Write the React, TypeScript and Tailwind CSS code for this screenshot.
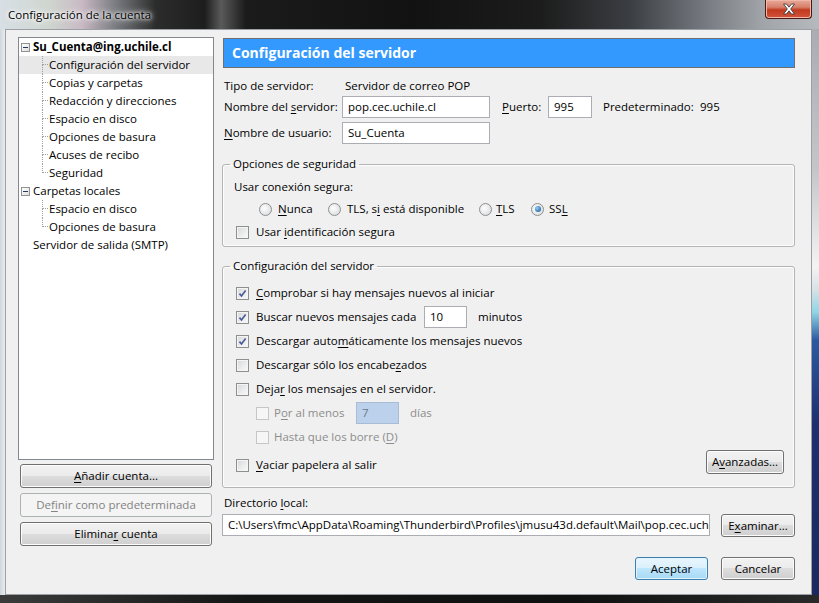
import type { ReactNode } from 'react';

const FONT = "[font-family:'Open_Sans','Noto_Sans',sans-serif]";

// mnemonic letter, Windows style
function U({ children }: { children: ReactNode }) {
  return <span className="underline underline-offset-[2px] decoration-[1px]">{children}</span>;
}

function Check({ checked = false, disabled = false }: { checked?: boolean; disabled?: boolean }) {
  return (
    <span
      className={`flex h-[13px] w-[13px] shrink-0 items-center justify-center border ${
        disabled
          ? 'border-[#c6c6c6] bg-[#f6f6f6]'
          : 'border-[#8e8f8f] bg-[linear-gradient(135deg,#d6d8db,#fbfbfb)] shadow-[inset_0_0_0_1px_#f4f4f4]'
      }`}
    >
      {checked && (
        <svg width="9" height="9" viewBox="0 0 9 9">
          <path d="M1.4 4.6l2.1 2.3L7.6 1.4" fill="none" stroke="#4a5f97" strokeWidth="1.7" />
        </svg>
      )}
    </span>
  );
}

function Radio({ on = false }: { on?: boolean }) {
  return (
    <span className="flex h-[13px] w-[13px] shrink-0 items-center justify-center rounded-full border border-[#8e8f8f] bg-[radial-gradient(circle_at_40%_40%,#ffffff,#d2d4d6)]">
      {on && (
        <span className="h-[6px] w-[6px] rounded-full bg-[radial-gradient(circle_at_35%_35%,#8fd0fb,#0e4a8c)]" />
      )}
    </span>
  );
}

function Btn({
  children,
  className = '',
  kind = 'normal',
}: {
  children: ReactNode;
  className?: string;
  kind?: 'normal' | 'default' | 'disabled';
}) {
  const look =
    kind === 'default'
      ? 'border-[#3c7fb1] bg-[linear-gradient(#eaf6fd_0%,#d9f0fc_50%,#bee6fd_50%,#a7d9f5_100%)] shadow-[inset_0_0_0_1px_#e2f3fc]'
      : kind === 'disabled'
        ? 'border-[#adb2b5] bg-[#f4f4f4] text-[#838383]'
        : 'border-[#707070] bg-[linear-gradient(#f2f2f2_0%,#ebebeb_50%,#dddddd_50%,#cfcfcf_100%)] shadow-[inset_0_0_0_1px_#fcfcfc]';
  return (
    <div className={`flex shrink-0 items-center justify-center rounded-[3px] border ${look} ${className}`}>
      {children}
    </div>
  );
}

function MinusBox() {
  return (
    <span className="flex h-[9px] w-[9px] shrink-0 items-center justify-center border border-[#919191] bg-[linear-gradient(135deg,#ffffff,#dedede)]">
      <span className="h-px w-[5px] bg-[#1e395b]" />
    </span>
  );
}

function TreeTop({ label, box = true, bold = false }: { label: string; box?: boolean; bold?: boolean }) {
  return (
    <div className="flex h-[18px] items-center">
      {box ? (
        <span className="ml-[2px] mr-[3px]">
          <MinusBox />
        </span>
      ) : (
        <span className="w-[14px]" />
      )}
      <span className={bold ? 'font-bold' : ''}>{label}</span>
    </div>
  );
}

function TreeChild({ label, last = false, selected = false }: { label: string; last?: boolean; selected?: boolean }) {
  return (
    <div className={`flex h-[18px] items-stretch ${selected ? 'bg-[#e8e8e8]' : ''}`}>
      <span className="ml-[23px] flex w-[6px] shrink-0 flex-col">
        <span className="h-[9px] border-b border-l border-dotted border-[#a0a0a0]" />
        <span className={`flex-1 ${last ? '' : 'border-l border-dotted border-[#a0a0a0]'}`} />
      </span>
      <span className="self-center pl-[1px]">{label}</span>
    </div>
  );
}

function Field({ value, className = '' }: { value: string; className?: string }) {
  return (
    <div className={`flex h-[22px] shrink-0 items-center overflow-hidden border border-[#abadb3] bg-white pl-[5px] ${className}`}>
      <span className="min-w-0 overflow-hidden">{value}</span>
    </div>
  );
}

function CheckRow({ children, checked = false }: { children: ReactNode; checked?: boolean }) {
  return (
    <div className="flex h-[24px] items-center gap-[7px]">
      <Check checked={checked} />
      <span>{children}</span>
    </div>
  );
}

export default function App() {
  const accounts = [
    'Configuración del servidor',
    'Copias y carpetas',
    'Redacción y direcciones',
    'Espacio en disco',
    'Opciones de basura',
    'Acuses de recibo',
    'Seguridad',
  ];

  return (
    <div className={`flex h-[603px] w-[819px] flex-col overflow-hidden whitespace-nowrap text-[11.5px] leading-[16px] text-black ${FONT}`}>
      {/* glass caption */}
      <div className="relative flex h-[29px] shrink-0 items-center bg-[linear-gradient(90deg,#d8dfe5_0%,#cfd6cf_6%,#c9b9c4_10%,#7b7e82_14%,#2c2c2c_19%,#1d1d1d_25%,#5a5a5a_27%,#1b1b1b_30%,#121212_50%,#1c1c1c_66%,#3b3e43_77%,#7c8086_87%,#a0a3a7_93%,#b6b9bd_100%)] pl-[8px]">
        <span className="[text-shadow:0_0_8px_#ffffff,0_0_5px_#ffffff,0_0_3px_#ffffff]">Configuración de la cuenta</span>
        <div className="absolute right-[7px] top-0 flex h-[19px] w-[47px] items-center justify-center rounded-b-[4px] border border-t-0 border-[#4a1a12] bg-[linear-gradient(#e9a99a_0%,#d7806b_40%,#c1391f_55%,#d2553b_100%)] shadow-[inset_0_0_0_1px_#f0b8aa]">
          <svg width="14" height="12" viewBox="0 0 14 12">
            <path
              d="M1.5 1h3l2.5 3.2L9.5 1h3L8.7 6l3.8 5h-3L7 7.8 4.5 11h-3l3.8-5z"
              fill="#ffffff"
              stroke="#3b3b3b"
              strokeWidth="0.9"
            />
          </svg>
        </div>
      </div>

      <div className="flex flex-1">
        <div className="w-[5px] shrink-0 bg-[linear-gradient(90deg,#cfd6dc,#e8ecef)]" />

        {/* client area */}
        <div className="flex w-[807px] shrink-0 gap-[8px] border border-[#9aa0a6] bg-[#f0f0f0] pl-[12px] pt-[7px]">
          {/* account tree + buttons */}
          <div className="flex w-[196px] shrink-0 flex-col">
            <div className="h-[423px] border border-[#828790] bg-white">
              <TreeTop label="Su_Cuenta@ing.uchile.cl" bold />
              {accounts.map((a, i) => (
                <TreeChild key={a} label={a} selected={i === 0} last={i === accounts.length - 1} />
              ))}
              <TreeTop label="Carpetas locales" />
              <TreeChild label="Espacio en disco" />
              <TreeChild label="Opciones de basura" last />
              <TreeTop label="Servidor de salida (SMTP)" box={false} />
            </div>
            <div className="mx-[2px] mt-[4px] flex flex-col gap-[5px]">
              <Btn className="h-[24px]">
                <span>
                  <U>A</U>ñadir cuenta...
                </span>
              </Btn>
              <Btn className="h-[24px]" kind="disabled">
                <span>
                  De<U>f</U>inir como predeterminada
                </span>
              </Btn>
              <Btn className="h-[24px]">
                <span>
                  Elimina<U>r</U> cuenta
                </span>
              </Btn>
            </div>
          </div>

          {/* settings page */}
          <div className="flex w-[573px] shrink-0 flex-col">
            <div className="ml-[1px] mt-[1px] flex h-[30px] items-center border border-[#6f6f6f] bg-[#3399ff] pl-[8px] text-[14px] font-bold text-white">
              Configuración del servidor
            </div>

            <div className="mt-[9px] flex h-[18px] items-center pl-[2px]">
              <span className="w-[118px]">Tipo de servidor:</span>
              <span className="pl-[3px]">Servidor de correo POP</span>
            </div>
            <div className="mt-[1px] flex items-center pl-[2px]">
              <span className="w-[118px]">
                Nombre del <U>s</U>ervidor:
              </span>
              <Field value="pop.cec.uchile.cl" className="w-[148px]" />
              <span className="ml-[12px] w-[46px]">
                <U>P</U>uerto:
              </span>
              <Field value="995" className="w-[44px]" />
              <span className="ml-[11px] w-[97px]">Predeterminado:</span>
              <span>995</span>
            </div>
            <div className="mt-[4px] flex items-center pl-[2px]">
              <span className="w-[118px]">
                <U>N</U>ombre de usuario:
              </span>
              <Field value="Su_Cuenta" className="w-[148px]" />
            </div>

            <fieldset className="mt-[12px] rounded-[3px] border border-[#b4b4b4] pb-[6px] pl-[11px] shadow-[inset_0_0_0_1px_#fdfdfd]">
              <legend className="ml-[-4px] px-[3px]">Opciones de seguridad</legend>
              <div className="mt-[7px] h-[16px]">Usar conexión segura:</div>
              <div className="mt-[6px] flex h-[16px] items-center pl-[25px]">
                <span className="flex w-[69px] items-center gap-[6px]">
                  <Radio />
                  <span>
                    <U>N</U>unca
                  </span>
                </span>
                <span className="flex w-[151px] items-center gap-[6px]">
                  <Radio />
                  <span>
                    TLS, s<U>i</U> está disponible
                  </span>
                </span>
                <span className="flex w-[52px] items-center gap-[4px]">
                  <Radio />
                  <span>
                    <U>T</U>LS
                  </span>
                </span>
                <span className="flex items-center gap-[5px]">
                  <Radio on />
                  <span>
                    SS<U>L</U>
                  </span>
                </span>
              </div>
              <div className="ml-[2px] mt-[7px] flex h-[16px] items-center gap-[7px]">
                <Check />
                <span>
                  Usar <U>i</U>dentificación segura
                </span>
              </div>
            </fieldset>

            <fieldset className="mt-[11px] rounded-[3px] border border-[#b4b4b4] pb-[12px] pl-[13px] pr-[10px] shadow-[inset_0_0_0_1px_#fdfdfd]">
              <legend className="ml-[-6px] px-[3px]">Configuración del servidor</legend>
              <div className="mt-[7px]">
                <CheckRow checked>
                  <U>C</U>omprobar si hay mensajes nuevos al iniciar
                </CheckRow>
                <div className="flex h-[24px] items-center gap-[7px]">
                  <Check checked />
                  <span className="w-[161px]">
                    Buscar nuevos mensa<U>j</U>es cada
                  </span>
                  <Field value="10" className="w-[43px]" />
                  <span className="ml-[4px]">minutos</span>
                </div>
                <CheckRow checked>
                  Descargar auto<U>m</U>áticamente los mensajes nuevos
                </CheckRow>
                <CheckRow>
                  Descargar sólo los encabe<U>z</U>ados
                </CheckRow>
                <CheckRow>
                  Deja<U>r</U> los mensajes en el servidor.
                </CheckRow>
                <div className="flex h-[24px] items-center gap-[5px] pl-[20px] text-[#8d8d8d]">
                  <Check disabled />
                  <span className="w-[77px]">
                    P<U>o</U>r al menos
                  </span>
                  <div className="flex h-[22px] w-[43px] items-center border border-[#a9bcd3] bg-[#bcd2ec] pl-[5px] text-[#6d7a88]">
                    7
                  </div>
                  <span className="ml-[6px]">días</span>
                </div>
                <div className="flex h-[24px] items-center gap-[5px] pl-[20px] text-[#8d8d8d]">
                  <Check disabled />
                  <span>
                    Hasta que los borre (<U>D</U>)
                  </span>
                </div>
                <div className="flex h-[26px] items-center justify-between">
                  <div className="mt-[6px] flex items-center gap-[7px]">
                    <Check />
                    <span>
                      <U>V</U>aciar papelera al salir
                    </span>
                  </div>
                  <Btn className="h-[24px] w-[78px]">
                    <span>
                      A<U>v</U>anzadas...
                    </span>
                  </Btn>
                </div>
              </div>
            </fieldset>

            <div className="mt-[7px] h-[16px] pl-[2px]">
              Directorio <U>l</U>ocal:
            </div>
            <div className="mt-[3px] flex items-start">
              <Field
                value="C:\Users\fmc\AppData\Roaming\Thunderbird\Profiles\jmusu43d.default\Mail\pop.cec.uchile.cl"
                className="w-[488px]"
              />
              <Btn className="ml-[11px] h-[23px] w-[74px]">
                <span>
                  E<U>x</U>aminar...
                </span>
              </Btn>
            </div>

            <div className="mt-[20px] flex justify-end gap-[13px]">
              <Btn className="h-[23px] w-[73px]" kind="default">
                Aceptar
              </Btn>
              <Btn className="h-[23px] w-[74px]">Cancelar</Btn>
            </div>
          </div>
        </div>

        <div className="flex-1 bg-[linear-gradient(#a9adb1_0%,#c4c7ca_25%,#f3f3f3_42%,#d9e2e6_46%,#8fd6e6_50%,#2b5aa0_55%,#1d2f6e_70%,#1a2a5e_100%)]" />
      </div>

      <div className="h-[8px] shrink-0 bg-[linear-gradient(90deg,#3b3b3b,#151515_30%,#101010_70%,#2a2a2a)]" />
    </div>
  );
}
